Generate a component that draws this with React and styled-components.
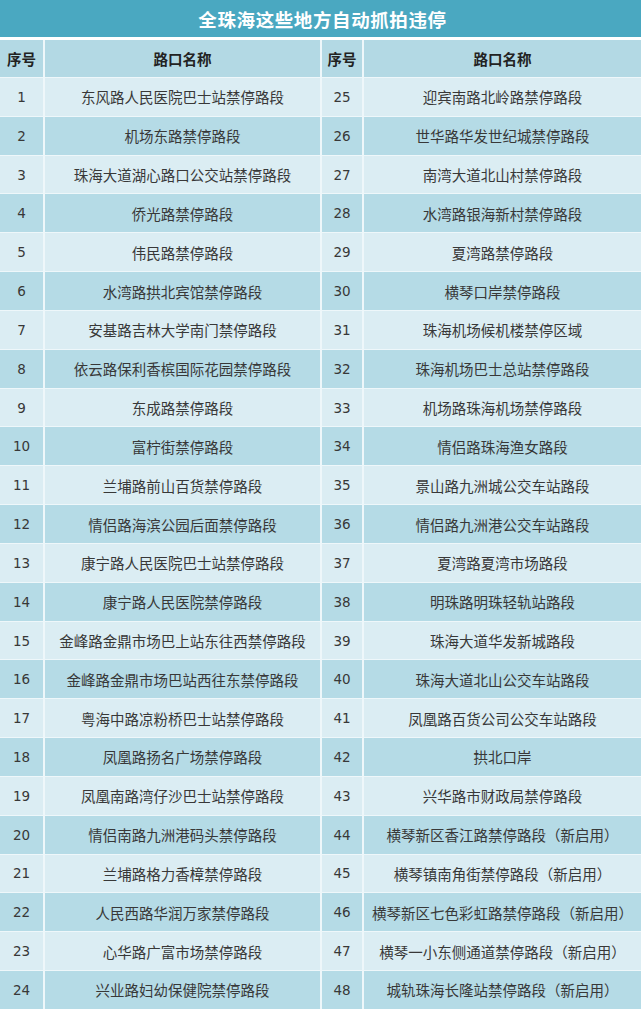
import React from 'react';
import styled, {createGlobalStyle} from 'styled-components';

const GlobalStyle = createGlobalStyle`
  html, body {
    margin: 0;
    padding: 0;
    background: #ffffff;
  }
  body {
    font-family: "Noto Sans CJK SC", "Noto Sans", sans-serif;
  }
`;

const left = [
    '东风路人民医院巴士站禁停路段',
    '机场东路禁停路段',
    '珠海大道湖心路口公交站禁停路段',
    '侨光路禁停路段',
    '伟民路禁停路段',
    '水湾路拱北宾馆禁停路段',
    '安基路吉林大学南门禁停路段',
    '依云路保利香槟国际花园禁停路段',
    '东成路禁停路段',
    '富柠街禁停路段',
    '兰埔路前山百货禁停路段',
    '情侣路海滨公园后面禁停路段',
    '康宁路人民医院巴士站禁停路段',
    '康宁路人民医院禁停路段',
    '金峰路金鼎市场巴上站东往西禁停路段',
    '金峰路金鼎市场巴站西往东禁停路段',
    '粤海中路凉粉桥巴士站禁停路段',
    '凤凰路扬名广场禁停路段',
    '凤凰南路湾仔沙巴士站禁停路段',
    '情侣南路九洲港码头禁停路段',
    '兰埔路格力香樟禁停路段',
    '人民西路华润万家禁停路段',
    '心华路广富市场禁停路段',
    '兴业路妇幼保健院禁停路段',
];

const right = [
    '迎宾南路北岭路禁停路段',
    '世华路华发世纪城禁停路段',
    '南湾大道北山村禁停路段',
    '水湾路银海新村禁停路段',
    '夏湾路禁停路段',
    '横琴口岸禁停路段',
    '珠海机场候机楼禁停区域',
    '珠海机场巴士总站禁停路段',
    '机场路珠海机场禁停路段',
    '情侣路珠海渔女路段',
    '景山路九洲城公交车站路段',
    '情侣路九洲港公交车站路段',
    '夏湾路夏湾市场路段',
    '明珠路明珠轻轨站路段',
    '珠海大道华发新城路段',
    '珠海大道北山公交车站路段',
    '凤凰路百货公司公交车站路段',
    '拱北口岸',
    '兴华路市财政局禁停路段',
    '横琴新区香江路禁停路段（新启用）',
    '横琴镇南角街禁停路段（新启用）',
    '横琴新区七色彩虹路禁停路段（新启用）',
    '横琴一小东侧通道禁停路段（新启用）',
    '城轨珠海长隆站禁停路段（新启用）',
];

function App() {
    return (
        <>
            <GlobalStyle/>
            <Wrapper>
                <TitleBar>全珠海这些地方自动抓拍违停</TitleBar>
                <Table>
                    <HeadCell>序号</HeadCell>
                    <HeadCell>路口名称</HeadCell>
                    <HeadCell>序号</HeadCell>
                    <HeadCell>路口名称</HeadCell>
                    {
                        left.map((name, i) =>
                            <React.Fragment key={i}>
                                <Cell $even={i % 2 === 1} $num>{i + 1}</Cell>
                                <Cell $even={i % 2 === 1}>{name}</Cell>
                                <Cell $even={i % 2 === 1} $num>{i + 25}</Cell>
                                <Cell $even={i % 2 === 1}>{right[i]}</Cell>
                            </React.Fragment>
                        )
                    }
                </Table>
            </Wrapper>
        </>
    )
}

export default App;

const Wrapper = styled.div`
  width: 641px;
  display: flex;
  flex-direction: column;
  gap: 3px;
  background: #ffffff;
`;

const TitleBar = styled.div`
  height: 37px;
  display: flex;
  align-items: center;
  justify-content: center;
  background: #4aa8c1;
  color: #ffffff;
  font-size: 18.5px;
  font-weight: 700;
  letter-spacing: 0.6px;
  padding-left: 4px;
`;

const Table = styled.div`
  display: grid;
  grid-template-columns: 43px 275px 40px 1fr;
  grid-template-rows: 37px;
  grid-auto-rows: 37.83px;
  column-gap: 2px;
  row-gap: 1px;
  background: #eef7fa;
`;

const HeadCell = styled.div`
  display: flex;
  align-items: center;
  justify-content: center;
  background: #b3d9e4;
  color: #222;
  font-size: 14.5px;
  font-weight: 700;
`;

const Cell = styled.div`
  display: flex;
  align-items: center;
  justify-content: center;
  background: ${({$even}) => $even ? '#b5dbe6' : '#dbedf3'};
  color: #383838;
  font-family: ${({$num}) => $num ? '"DejaVu Sans", sans-serif' : 'inherit'};
  font-size: ${({$num}) => $num ? '13.5px' : '14.5px'};
  white-space: nowrap;
`;
